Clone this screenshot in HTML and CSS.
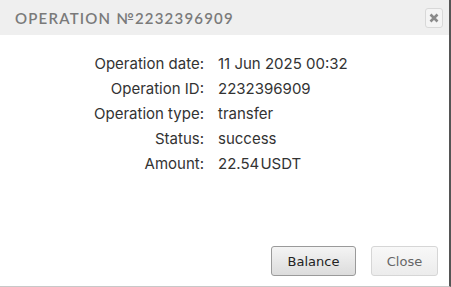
FILE: index.html
```html
<!DOCTYPE html>
<html>
<head>
<meta charset="utf-8">
<link rel="stylesheet" href="styles.css">
</head>
<body>
<div class="dialog">
  <div class="header">
    <span class="title">OPERATION №2232396909</span>
    <button class="x-btn" aria-label="close">
      <svg width="10" height="10" viewBox="0 0 10 10"><path d="M1.5 1.5 L8.5 8.5 M8.5 1.5 L1.5 8.5" stroke="#8a8a8a" stroke-width="2.6" stroke-linecap="butt"/></svg>
    </button>
  </div>
  <div class="content">
    <div class="grid">
      <div class="lbl">Operation date:</div><div class="val">11 Jun 2025 00:32</div>
      <div class="lbl">Operation ID:</div><div class="val">2232396909</div>
      <div class="lbl">Operation type:</div><div class="val">transfer</div>
      <div class="lbl">Status:</div><div class="val">success</div>
      <div class="lbl">Amount:</div><div class="val amt">22.54 USDT</div>
    </div>
  </div>
  <div class="footer">
    <button class="btn primary">Balance</button>
    <button class="btn light">Close</button>
  </div>
</div>
</body>
</html>
```
FILE: styles.css
```css
html, body { margin: 0; padding: 0; background: #fff; }
.dialog {
  width: 449px;
  height: 286px;
  border-right: 2px solid #555;
  border-bottom: 1px solid #c8c8c8;
  display: flex;
  flex-direction: column;
  background: #fff;
}
.header {
  height: 35px;
  background: #efefef;
  display: flex;
  align-items: center;
  justify-content: space-between;
  padding: 0 6px 0 15px;
}
.title {
  font-family: Lato, sans-serif;
  font-weight: 600;
  font-size: 15px;
  letter-spacing: 1.2px;
  color: #7a7a7a;
  padding-top: 1px;
}
.x-btn {
  width: 18px;
  height: 20px;
  padding: 0;
  border: 1px solid #d8d8d8;
  border-radius: 3px;
  background: #f4f4f4;
  display: flex;
  align-items: center;
  justify-content: center;
}
.content {
  flex: 1;
  padding-top: 16px;
}
.grid {
  display: grid;
  grid-template-columns: 204px auto;
  column-gap: 14px;
  row-gap: 0;
  font-family: Inter, sans-serif;
  font-size: 15px;
  color: #333;
}
.grid > div { height: 25px; line-height: 25px; }
.lbl { text-align: right; }
.amt { word-spacing: -3px; }
.footer {
  display: flex;
  justify-content: flex-end;
  gap: 15px;
  padding: 0 11px 10px 0;
}
.btn {
  height: 30px;
  font-family: "DejaVu Sans", Verdana, sans-serif;
  font-size: 13px;
  border-radius: 3px;
  padding: 0;
}
.primary {
  width: 85px;
  color: #222;
  border: 1px solid #9a9a9a;
  background: linear-gradient(#f4f4f4, #dcdcdc);
}
.light {
  width: 67px;
  color: #666;
  border: 1px solid #d6d6d6;
  background: linear-gradient(#f8f8f8, #ececec);
}
```
